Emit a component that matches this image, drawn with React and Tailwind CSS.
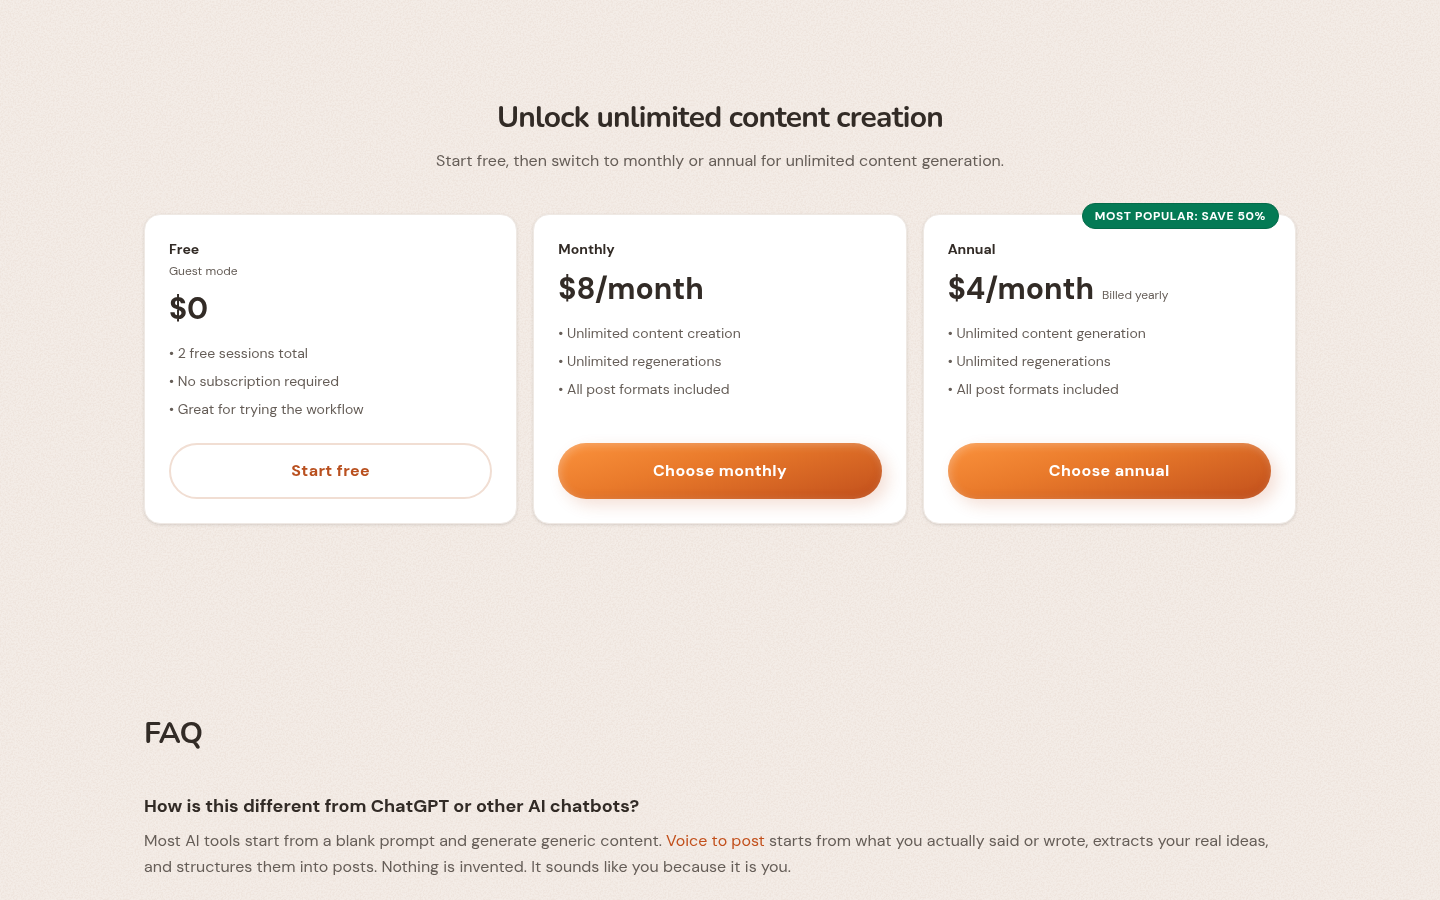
import React from 'react';
import { clsx } from 'clsx';

const plans = [
  {
    id: 'free',
    name: 'Free',
    note: 'Guest mode',
    price: '$0',
    features: ['2 free sessions total', 'No subscription required', 'Great for trying the workflow'],
    cta: 'Start free',
  },
  {
    id: 'monthly',
    name: 'Monthly',
    price: '$8/month',
    features: ['Unlimited content creation', 'Unlimited regenerations', 'All post formats included'],
    cta: 'Choose monthly',
    primary: true,
  },
  {
    id: 'annual',
    name: 'Annual',
    price: '$4/month',
    billing: 'Billed yearly',
    badge: 'Most popular: save 50%',
    features: ['Unlimited content generation', 'Unlimited regenerations', 'All post formats included'],
    cta: 'Choose annual',
    primary: true,
  },
];

// Paper grain behind the whole page
function Grain() {
  return (
    <svg className="pointer-events-none absolute inset-0 h-full w-full opacity-25 mix-blend-soft-light" aria-hidden="true">
      <filter id="grain" x="0" y="0" width="100%" height="100%" colorInterpolationFilters="sRGB">
        <feTurbulence type="fractalNoise" baseFrequency="0.6" numOctaves="3" stitchTiles="stitch" />
        <feColorMatrix type="matrix" values="3 0 0 0 -1  3 0 0 0 -1  3 0 0 0 -1  0 0 0 0 1" />
      </filter>
      <rect width="100%" height="100%" filter="url(#grain)" />
    </svg>
  );
}

function PlanCard({ plan }) {
  return (
    <article className="relative flex flex-col rounded-2xl border border-[#efe9e4] bg-white p-6 shadow-[0_1px_3px_rgba(50,43,38,0.14)]">
      {plan.badge && (
        <span className="absolute -top-3 right-4 rounded-full border border-[#046a49] bg-[#047a55] px-3 py-1 text-xs font-bold tracking-wider uppercase text-white">
          {plan.badge}
        </span>
      )}

      <h3 className="text-sm leading-5 font-bold text-[#322b26]">{plan.name}</h3>
      {plan.note && <p className="mt-1 text-xs text-[#655d57]">{plan.note}</p>}

      <div className="mt-2 flex items-baseline gap-2">
        <p className="text-3xl leading-11 font-bold text-[#322b26]">{plan.price}</p>
        {plan.billing && <span className="text-xs text-[#655d57]">{plan.billing}</span>}
      </div>

      <ul className="mt-3 mb-6 space-y-2 text-sm text-[#655d57]">
        {plan.features.map(feature => (
          <li key={feature}>• {feature}</li>
        ))}
      </ul>

      <button
        type="button"
        className={clsx(
          'mt-auto h-14 w-full rounded-full text-base font-bold tracking-wide',
          plan.primary
            ? 'bg-[linear-gradient(165deg,#fb923c_0%,#e97a2b_40%,#c2501c_100%)] text-white shadow-[6px_6px_16px_rgba(194,80,28,0.18),inset_2px_2px_8px_rgba(255,255,255,0.28),inset_-2px_-2px_8px_rgba(160,50,10,0.12)]'
            : 'border-2 border-[#f1ded3] bg-white text-[#b9501f]'
        )}
      >
        {plan.cta}
      </button>
    </article>
  );
}

export default function App() {
  return (
    <div className="relative min-h-screen bg-[#f2eae4] font-['DM_Sans',Inter,sans-serif]">
      <Grain />

      <main className="relative mx-auto max-w-6xl">
        {/* PRICING */}
        <section className="py-24">
          <div className="mb-10 text-center">
            <h2 className="font-['Nunito','Open_Sans',sans-serif] text-3xl leading-11 font-bold tracking-tight text-[#322b26]">
              Unlock unlimited content creation
            </h2>
            <p className="mt-2 text-base leading-[26px] text-[#655d57]">
              Start free, then switch to monthly or annual for unlimited content generation.
            </p>
          </div>

          <div className="grid gap-4 md:grid-cols-3">
            {plans.map(plan => (
              <PlanCard key={plan.id} plan={plan} />
            ))}
          </div>
        </section>

        {/* FAQ */}
        <section className="pt-24 pb-6">
          <h2 className="mb-10 font-['Nunito','Open_Sans',sans-serif] text-3xl leading-9 font-bold tracking-tight text-[#322b26]">FAQ</h2>

          <h3 className="text-lg leading-7 font-bold text-[#322b26]">
            How is this different from ChatGPT or other AI chatbots?
          </h3>
          <p className="mt-2 text-base leading-[26px] text-[#655d57]">
            Most AI tools start from a blank prompt and generate generic content.{' '}
            <a href="#voice-to-post" className="text-[#c2501c]">Voice to post</a> starts from what you
            actually said or wrote, extracts your real ideas, and structures them into posts. Nothing is
            invented. It sounds like you because it is you.
          </p>
        </section>
      </main>
    </div>
  );
}
